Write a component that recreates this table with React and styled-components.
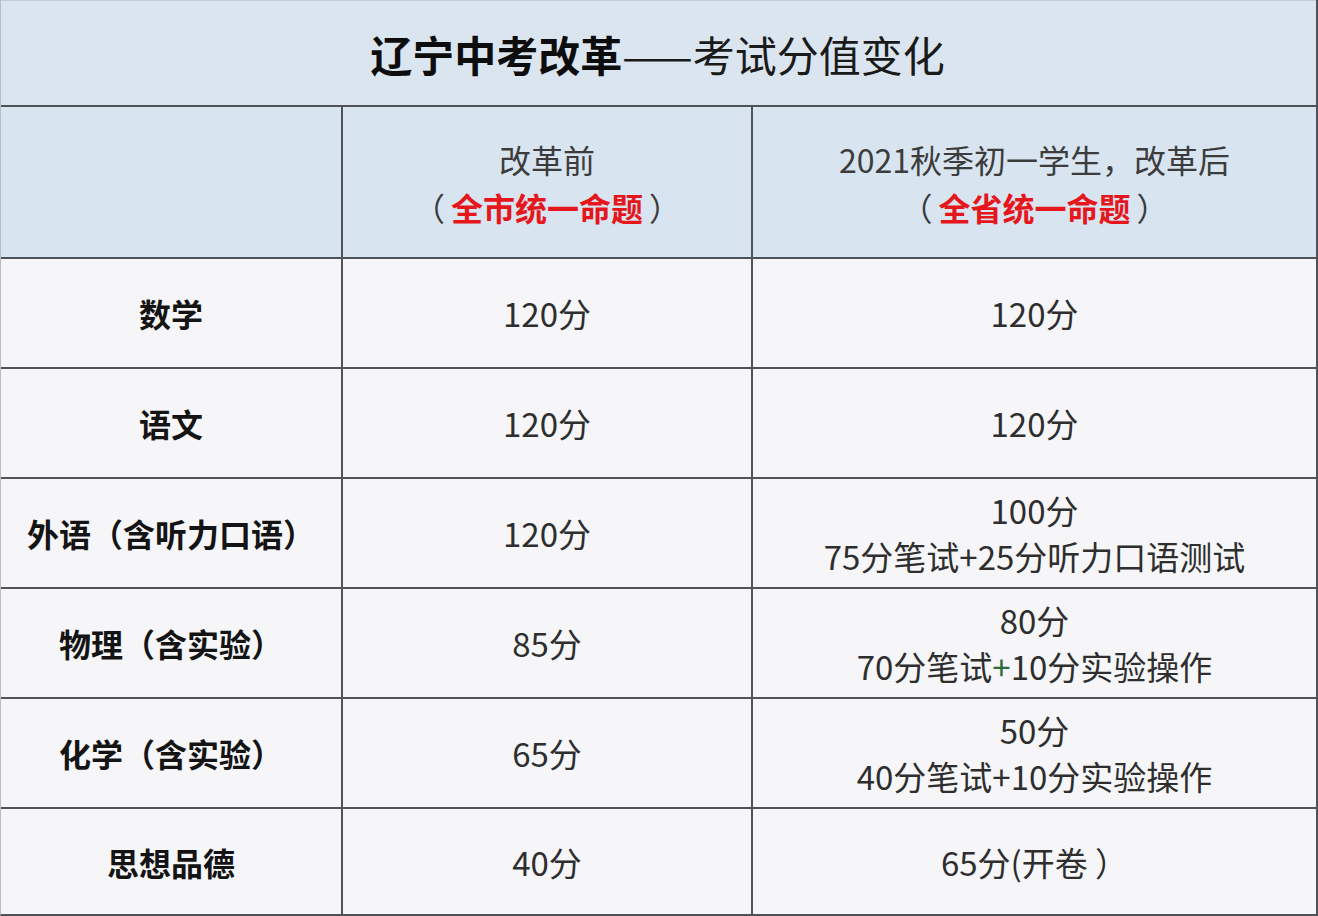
import styled, { createGlobalStyle } from 'styled-components';

const GlobalStyle = createGlobalStyle`
  html, body {
    margin: 0;
    padding: 0;
    background: #f6f6f9;
  }
  body {
    font-family: "Noto Sans CJK SC", "Noto Sans", sans-serif;
  }
`;

const Sheet = styled.div`
  width: 1318px;
  height: 916px;
  display: flex;
  flex-direction: column;
  box-sizing: border-box;
  border-left: 1px solid #b9bcc2;
  border-right: 2px solid #4e5155;
  border-bottom: 2px solid #4e5155;
  background: #505357;
  overflow: hidden;
`;

const Title = styled.div`
  height: 107px;
  flex-shrink: 0;
  box-sizing: border-box;
  display: flex;
  align-items: center;
  justify-content: center;
  background: #dae5ef;
  border-top: 1px solid #c3ccd6;
  border-bottom: 2px solid #4e5155;
  padding-right: 2px;
  font-size: 42px;
  color: #1a1a1a;

  strong {
    font-weight: 700;
    color: #0d0d0d;
  }
`;

const Grid = styled.div`
  flex: 1;
  display: grid;
  grid-template-columns: 340px 408px 1fr;
  grid-template-rows: 150px repeat(5, 108px) 1fr;
  column-gap: 2px;
  row-gap: 2px;
`;

const Row = styled.div`
  display: contents;
`;

const HeadCell = styled.div`
  background: #d8e4ef;
  display: flex;
  flex-direction: column;
  align-items: center;
  justify-content: center;
  font-size: 32px;
  line-height: 48px;
  color: #3c3c3c;
  padding-top: 2px;
`;

const Cell = styled.div`
  background: #f6f6f9;
  display: flex;
  flex-direction: column;
  align-items: center;
  justify-content: center;
  font-size: ${props => (props.$bold ? '32px' : '33px')};
  line-height: 46px;
  font-weight: ${props => (props.$bold ? 700 : 400)};
  color: ${props => (props.$bold ? '#141414' : '#2e2e2e')};
  white-space: nowrap;
`;

const Line = styled.div`
  white-space: nowrap;
`;

const Red = styled.span`
  color: #e5161c;
  font-weight: 700;
  margin: 0 6px;
`;

const Plus = styled.span`
  color: #2f6b3c;
`;

const rows = [
  { subject: '数学', before: '120分', after: ['120分'] },
  { subject: '语文', before: '120分', after: ['120分'] },
  { subject: '外语（含听力口语）', before: '120分', after: ['100分', '75分笔试+25分听力口语测试'] },
  { subject: '物理（含实验）', before: '85分', after: ['80分', <>70分笔试<Plus>+</Plus>10分实验操作</>] },
  { subject: '化学（含实验）', before: '65分', after: ['50分', '40分笔试+10分实验操作'] },
  { subject: '思想品德', before: '40分', after: ['65分(开卷 ）'] },
];

const App = () => {
  return (
    <Sheet>
      <GlobalStyle />
      <Title>
        <strong>辽宁中考改革</strong>——考试分值变化
      </Title>
      <Grid>
        <HeadCell />
        <HeadCell>
          <Line>改革前</Line>
          <Line>（<Red>全市统一命题</Red>）</Line>
        </HeadCell>
        <HeadCell>
          <Line>2021秋季初一学生，改革后</Line>
          <Line>（<Red>全省统一命题</Red>）</Line>
        </HeadCell>

        {rows.map(row => (
          <Row key={row.subject}>
            <Cell $bold>{row.subject}</Cell>
            <Cell>{row.before}</Cell>
            <Cell>
              {row.after.map((line, i) => (
                <Line key={i}>{line}</Line>
              ))}
            </Cell>
          </Row>
        ))}
      </Grid>
    </Sheet>
  );
};

export default App;
